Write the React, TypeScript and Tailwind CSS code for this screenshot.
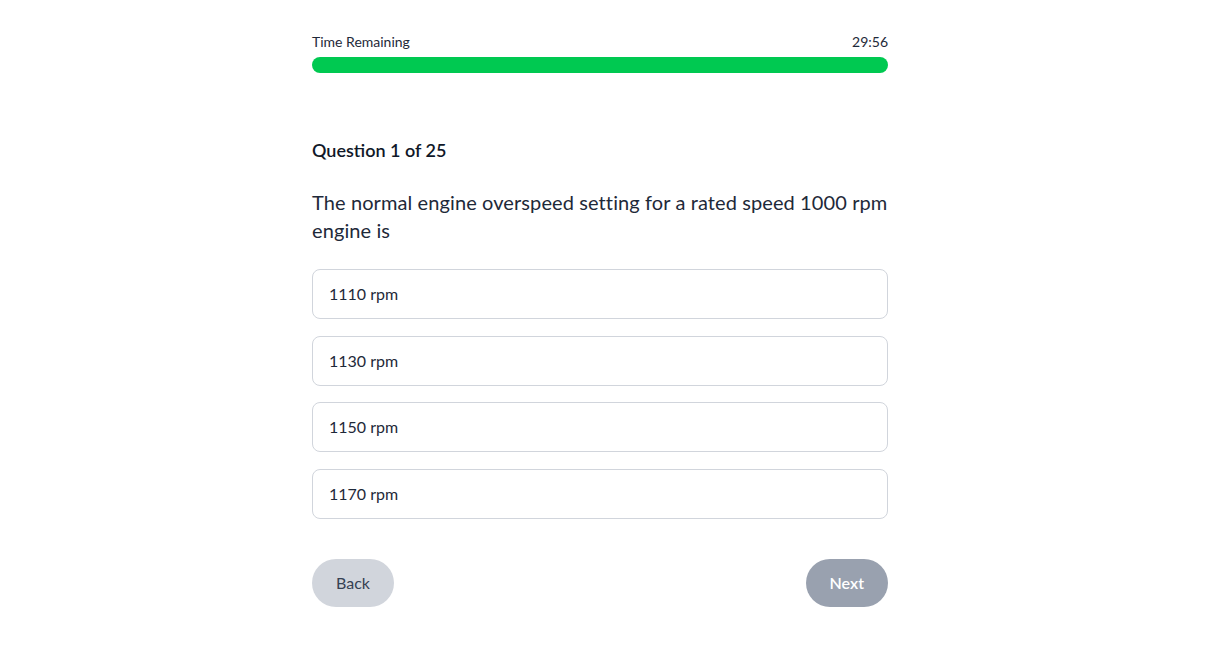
export default function App() {
  const options = ["1110 rpm", "1130 rpm", "1150 rpm", "1170 rpm"];
  return (
    <div className="min-h-screen bg-white pr-[26px]" style={{ fontFamily: "Lato, 'Noto Sans', sans-serif" }}>
      <div className="mx-auto w-[576px] pt-8">
        <div className="flex justify-between text-sm text-gray-800">
          <span>Time Remaining</span>
          <span>29:56</span>
        </div>
        <div className="mt-[5px] h-4 w-full rounded-full bg-green-500" />
        <div className="mt-[63px] text-lg font-semibold leading-7 text-gray-900">Question 1 of 25</div>
        <div className="mt-6 text-xl leading-7 tracking-[0.1px] text-gray-800">
          The normal engine overspeed setting for a rated speed 1000 rpm engine is
        </div>
        <div className="mt-[25px] flex flex-col gap-[16.5px]">
          {options.map((o) => (
            <div key={o} className="flex h-[50px] items-center rounded-lg border border-gray-300 px-4 text-base text-gray-800">
              {o}
            </div>
          ))}
        </div>
        <div className="mt-10 flex justify-between">
          <button className="h-12 rounded-full bg-gray-300 px-6 text-base text-gray-700">Back</button>
          <button className="h-12 rounded-full bg-gray-400 px-6 text-base font-semibold text-white">Next</button>
        </div>
      </div>
    </div>
  );
}
